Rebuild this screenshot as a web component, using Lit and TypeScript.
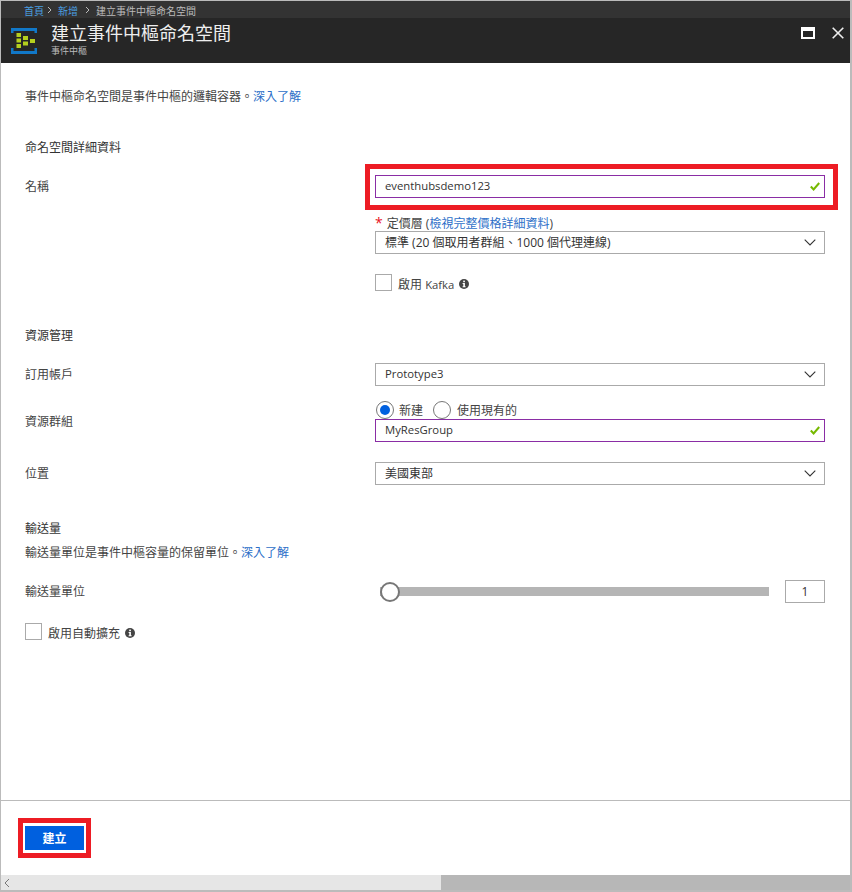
import { LitElement, html, css, svg } from "lit";
import { customElement } from "lit/decorators.js";

const chevron = html`<svg class="chev" width="12" height="7" viewBox="0 0 12 7"><path d="M.7.7L6 6l5.300-5.300" fill="none" stroke="#333" stroke-width="1.1"/></svg>`;
const check = html`<svg class="check" width="10" height="9" viewBox="0 0 10 9"><path d="M.8 4.500l2.800 3L9.200 1" fill="none" stroke="#76b900" stroke-width="2"/></svg>`;
const info = html`<svg class="info" width="10" height="10" viewBox="0 0 10 10"><circle cx="5" cy="5" r="5" fill="#444"/><rect x="4.200" y="1.600" width="1.700" height="1.600" fill="#fff"/><path d="M3.600 4.100h2.300v3.200h.7v1H3.600v-1h.7V5.100h-.7z" fill="#fff"/></svg>`;
const crumbArrow = html`<svg width="6" height="8" viewBox="0 0 6 8"><path d="M1 1l3 3-3 3" fill="none" stroke="#bbb"/></svg>`;

const logoSquares = [
  [16.5, 33, 4.5, 4], [16.5, 38.5, 4.5, 4], [16.5, 44, 4.5, 4],
  [23, 36, 5, 4], [23, 41.5, 5, 4],
  [30, 39, 5, 4],
];

@customElement("app-root")
export class AppRoot extends LitElement {
  static styles = css`
    :host {
      display: block;
      width: 852px;
      height: 892px;
      font-family: "Open Sans", "Noto Sans CJK TC", sans-serif;
      font-size: 12px;
      color: #444;
    }
    .blade {
      box-sizing: border-box;
      width: 852px;
      height: 892px;
      display: flex;
      flex-direction: column;
      border-left: 1px solid #bbb;
      border-right: 2px solid #bbb;
      border-bottom: 2px solid #bbb;
      border-top: 1px solid #bbb;
      background: #fff;
      position: relative;
    }
    .crumbs {
      box-sizing: border-box;
      height: 17px;
      flex: none;
      background: #333;
      color: #bbb;
      font-size: 10px;
      display: flex;
      align-items: center;
      padding: 1px 0 0 23px;
    }
    .crumbs a { color: #4a9fe0; }
    .crumbs .first { display: flex; margin: 0 5px 0 3px; }
    .crumbs .second { display: flex; margin: 0 5px 0 7px; }
    .titlebar {
      height: 45px;
      background: #262626;
      display: flex;
      align-items: center;
      color: #fff;
      flex: none;
    }
    .logo { margin-left: 10px; flex: none; }
    .titles { margin-left: 12px; display: flex; flex-direction: column; align-self: flex-start; padding-top: 4px; }
    .titles h1 {
      margin: 0;
      font-size: 18px;
      font-weight: 400;
      line-height: 22px;
      color: #eee;
    }
    .titles small { font-size: 9px; line-height: 12px; color: #bbb; margin-top: 1px; }
    .winbtns {
      margin-left: auto;
      display: flex;
      gap: 17px;
      align-self: flex-start;
      margin-top: 9px;
      margin-right: 6px;
    }
    .content {
      flex: 1;
      padding: 0 25px 0 24px;
      display: flex;
      flex-direction: column;
    }
    a { color: #2d6fc8; text-decoration: none; }
    .intro { height: 18px; line-height: 18px; margin-top: 25px; }
    h2 {
      margin: 0;
      font-size: 12px;
      font-weight: 400;
      line-height: 18px;
      color: #333;
    }
    .row {
      display: grid;
      grid-template-columns: 350px 450px;
      align-items: center;
    }
    .row > span:first-child { margin-top: -2px; }
    .field {
      box-sizing: border-box;
      height: 23px;
      border: 1px solid #aaa;
      display: flex;
      align-items: center;
      justify-content: space-between;
      padding: 0 5px 0 9px;
      color: #333;
      background: #fff;
    }
    .field.valid { border-color: #8a2da5; }
    .field > span { padding-bottom: 2px; }
    .chev { margin-right: 3px; }
    .check { margin-right: -1px; }
    .lat { font-size: 11.3px; }
    .stack { display: flex; flex-direction: column; }
    .req {
      color: #e81123;
      font-size: 14px;
      line-height: 10px;
      align-self: flex-start;
      margin: 3px 4px 0 0;
    }
    .fieldlabel { box-sizing: border-box; display: flex; height: 18px; align-items: center; padding-top: 2px; }
    .checkline { display: flex; align-items: center; gap: 6px; height: 17px; }
    .checkline .text { padding-top: 2px; }
    .box { box-sizing: border-box; width: 17px; height: 17px; border: 1px solid #aaa; flex: none; }
    .info { margin: 3px 0 0 -1px; }
    .radios { display: flex; align-items: center; height: 18px; padding-left: 1px; }
    .radio {
      box-sizing: border-box;
      width: 18px;
      height: 18px;
      border-radius: 50%;
      border: 1px solid #777;
      display: flex;
      align-items: center;
      justify-content: center;
      margin-right: 5px;
    }
    .radio.on::after {
      content: "";
      width: 10px;
      height: 10px;
      border-radius: 50%;
      background: #0060df;
    }
    .radios span + .radio { margin: 0 6px 0 10px; }
    .slider { display: flex; align-items: center; gap: 16px; }
    .track { flex: 1; height: 9px; background: #b5b5b5; position: relative; margin-left: 5px; }
    .thumb {
      position: absolute;
      left: 0;
      top: -5.5px;
      box-sizing: border-box;
      width: 20px;
      height: 20px;
      border-radius: 50%;
      border: 2px solid #777;
      background: #fff;
    }
    .num {
      box-sizing: border-box;
      width: 40px;
      height: 23px;
      border: 1px solid #aaa;
      display: flex;
      align-items: center;
      justify-content: center;
      color: #333;
    }
    .footer {
      height: 75px;
      flex: none;
      border-top: 1px solid #bbb;
      padding: 25px 0 0 24px;
      box-sizing: border-box;
    }
    .create {
      width: 59px;
      height: 24px;
      background: #0060df;
      color: #fff;
      display: flex;
      align-items: center;
      justify-content: center;
      font-weight: 700;
      outline: 3px solid #fff;
    }
    .scrollbar {
      height: 15px;
      flex: none;
      background: #e6e6e6;
      display: flex;
      align-items: center;
    }
    .scrollbar svg { margin-left: 3px; }
    .scrollbar i { margin-left: auto; width: 409px; height: 15px; background: #b7b7b7; }
    .mark { position: absolute; border: 5px solid #ed1c24; box-sizing: border-box; pointer-events: none; }
    .mark.name { left: 364px; top: 163px; width: 473px; height: 46px; }
    .mark.btn { left: 17px; top: 817px; width: 73px; height: 40px; }
  `;

  render() {
    return html`
      <div class="blade">
        <div class="crumbs">
          <a>首頁</a>
          <span class="first">${crumbArrow}</span>
          <a>新增</a>
          <span class="second">${crumbArrow}</span>
          <span>建立事件中樞命名空間</span>
        </div>
        <div class="titlebar">
          <svg class="logo" width="28" height="29" viewBox="11 26 28 29">
            <path d="M11 28h26v5h-2.500v-2h-21v2H11zM11 48h2.500v3h21v-3H37v6H11z" fill="#1178c8"/>
            ${logoSquares.map(([x, y, w, h]) => svg`<rect x=${x} y=${y} width=${w} height=${h} fill="#b4cf1e"/>`)}
          </svg>
          <div class="titles">
            <h1>建立事件中樞命名空間</h1>
            <small>事件中樞</small>
          </div>
          <div class="winbtns">
            <svg width="14" height="12" viewBox="0 0 14 12"><path fill-rule="evenodd" d="M0 0h14v12H0zM2 4v6h10V4z" fill="#fff"/></svg>
            <svg width="12" height="12" viewBox="0 0 12 12"><path d="M.7.7l10.600 10.600M11.300.7L.7 11.300" stroke="#eee" stroke-width="1.600"/></svg>
          </div>
        </div>

        <div class="content">
          <div class="intro">事件中樞命名空間是事件中樞的邏輯容器。<a>深入了解</a></div>

          <h2 style="margin-top:33px">命名空間詳細資料</h2>
          <div class="row" style="margin-top:18px">
            <span>名稱</span>
            <div class="field valid"><span class="lat">eventhubsdemo123</span>${check}</div>
          </div>
          <div class="row" style="margin-top:15px">
            <span></span>
            <div class="stack">
              <div class="fieldlabel"><span class="req">*</span><span>定價層 (<a>檢視完整價格詳細資料</a>)</span></div>
              <div class="field"><span>標準 (20 個取用者群組、1000 個代理連線)</span>${chevron}</div>
            </div>
          </div>
          <div class="row" style="margin-top:20px">
            <span></span>
            <div class="checkline"><span class="box"></span><span class="text">啟用 <span class="lat">Kafka</span></span>${info}</div>
          </div>

          <h2 style="margin-top:36px">資源管理</h2>
          <div class="row" style="margin-top:18px">
            <span>訂用帳戶</span>
            <div class="field"><span class="lat">Prototype3</span>${chevron}</div>
          </div>
          <div class="row" style="margin-top:15px">
            <span>資源群組</span>
            <div class="stack">
              <div class="radios">
                <span class="radio on"></span><span>新建</span>
                <span class="radio"></span><span>使用現有的</span>
              </div>
              <div class="field valid"><span class="lat">MyResGroup</span>${check}</div>
            </div>
          </div>
          <div class="row" style="margin-top:20px">
            <span>位置</span>
            <div class="field"><span>美國東部</span>${chevron}</div>
          </div>

          <h2 style="margin-top:35px">輸送量</h2>
          <div style="margin-top:6px;line-height:18px">輸送量單位是事件中樞容量的保留單位。<a>深入了解</a></div>
          <div class="row" style="margin-top:18px">
            <span>輸送量單位</span>
            <div class="slider">
              <div class="track"><div class="thumb"></div></div>
              <div class="num">1</div>
            </div>
          </div>
          <div class="checkline" style="margin-top:20px"><span class="box"></span><span class="text">啟用自動擴充</span>${info}</div>
        </div>

        <div class="footer"><div class="create">建立</div></div>
        <div class="scrollbar">
          <svg width="6" height="10" viewBox="0 0 6 10"><path d="M5 1L1 5l4 4" fill="none" stroke="#777"/></svg>
          <i></i>
        </div>
        <div class="mark name"></div>
        <div class="mark btn"></div>
      </div>
    `;
  }
}
